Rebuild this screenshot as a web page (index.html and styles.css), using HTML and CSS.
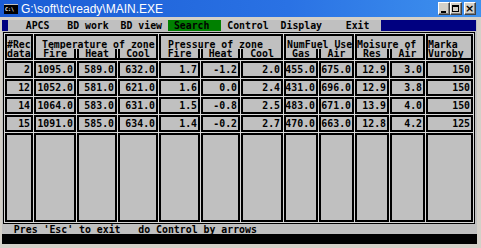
FILE: index.html
```html
<!DOCTYPE html>
<html>
<head>
<meta charset="utf-8">
<link rel="stylesheet" href="styles.css">
</head>
<body>
<div class="window">
  <div class="titlebar">
    <div class="appicon"><span class="appicon-text">C:\</span></div>
    <div class="title">G:\soft\tc\ready\MAIN.EXE</div>
    <div class="buttons">
      <div class="btn btn-min"><span class="min-glyph"></span></div>
      <div class="btn btn-max"><span class="max-glyph"></span></div>
      <div class="btn btn-close">×</div>
    </div>
  </div>
  <div class="screen">
    <div class="menu"><span class="blk"> </span>   APCS   BD work  BD view <span class="sel"> Search  </span> Control  Display    Exit  <span class="blk">                </span></div>
    <div class="frame">
      <div class="grid">
        <div class="cell head hl">#Rec<br>data</div>
        <div class="cell head group g3">
          <div class="gtitle pad6">Temperature of zone</div>
          <div class="sub sub-temp"><div class="sc first">Fire</div><div class="sc mid">Heat</div><div class="sc last">Cool</div></div>
        </div>
        <div class="cell head group g3">
          <div class="gtitle pad7">Pressure of zone</div>
          <div class="sub sub-press"><div class="sc first">Fire</div><div class="sc mid">Heat</div><div class="sc last">Cool</div></div>
        </div>
        <div class="cell head group g2">
          <div class="gtitle pad1">NumFuel Use</div>
          <div class="sub sub-fuel"><div class="sc first">Gas</div><div class="sc last">Air</div></div>
        </div>
        <div class="cell head group g2">
          <div class="gtitle">Moisure of</div>
          <div class="sub sub-moist"><div class="sc first">Res</div><div class="sc last">Air</div></div>
        </div>
        <div class="cell head hl">Marka<br>Vuroby</div>

        <div class="cell num">2</div><div class="cell num">1095.0</div><div class="cell num">589.0</div><div class="cell num">632.0</div><div class="cell num">1.7</div><div class="cell num">-1.2</div><div class="cell num">2.0</div><div class="cell num">455.0</div><div class="cell num">675.0</div><div class="cell num">12.9</div><div class="cell num">3.0</div><div class="cell num">150</div>

        <div class="cell num">12</div><div class="cell num">1052.0</div><div class="cell num">581.0</div><div class="cell num">621.0</div><div class="cell num">1.6</div><div class="cell num">0.0</div><div class="cell num">2.4</div><div class="cell num">431.0</div><div class="cell num">696.0</div><div class="cell num">12.9</div><div class="cell num">3.8</div><div class="cell num">150</div>

        <div class="cell num">14</div><div class="cell num">1064.0</div><div class="cell num">583.0</div><div class="cell num">631.0</div><div class="cell num">1.5</div><div class="cell num">-0.8</div><div class="cell num">2.5</div><div class="cell num">483.0</div><div class="cell num">671.0</div><div class="cell num">13.9</div><div class="cell num">4.0</div><div class="cell num">150</div>

        <div class="cell num">15</div><div class="cell num">1091.0</div><div class="cell num">585.0</div><div class="cell num">634.0</div><div class="cell num">1.4</div><div class="cell num">-0.2</div><div class="cell num">2.7</div><div class="cell num">470.0</div><div class="cell num">663.0</div><div class="cell num">12.8</div><div class="cell num">4.2</div><div class="cell num">125</div>

        <div class="cell"></div><div class="cell"></div><div class="cell"></div><div class="cell"></div><div class="cell"></div><div class="cell"></div><div class="cell"></div><div class="cell"></div><div class="cell"></div><div class="cell"></div><div class="cell"></div><div class="cell"></div>
      </div>
    </div>
    <div class="status">  Pres 'Esc' to exit   do Control by arrows</div>
    <div class="blackbar"></div>
  </div>
</div>
</body>
</html>
```

FILE: styles.css
```css
html, body {
  margin: 0;
  padding: 0;
  background: #d4d0c8;
}

.window {
  width: 481px;
  height: 248px;
  background: #d4d0c8;
  overflow: hidden;
}

.titlebar {
  height: 17px;
  display: flex;
  align-items: center;
  background: linear-gradient(to right, #1a5cd4, #2a72e4 60%, #3f92ee);
  color: #fff;
}

.appicon {
  width: 14px;
  height: 9px;
  margin-left: 4px;
  margin-top: 1px;
  background: #000;
  border-top: 1px solid #c0c0c0;
  display: flex;
  align-items: center;
  justify-content: flex-start;
  overflow: hidden;
}

.appicon-text {
  font-family: "DejaVu Sans Mono", monospace;
  font-size: 5px;
  font-weight: bold;
  line-height: 5px;
  color: #fff;
  margin-left: 1px;
}

.title {
  margin-left: 3px;
  font-family: "Liberation Sans", Arial, sans-serif;
  font-size: 12px;
  line-height: 14px;
  letter-spacing: 0;
  white-space: pre;
}

.buttons {
  margin-left: auto;
  margin-right: 5px;
  display: flex;
  align-items: center;
}

.btn {
  box-sizing: border-box;
  width: 12px;
  height: 13px;
  background: #d4d0c8;
  border: 1px solid;
  border-color: #fff #404040 #404040 #fff;
  box-shadow: inset -1px -1px 0 #808080;
  display: flex;
  align-items: center;
  justify-content: center;
  color: #000;
  position: relative;
}

.btn-max {
  margin-right: 2px;
}

.min-glyph {
  width: 5px;
  height: 2px;
  background: #000;
  margin-top: 6px;
  margin-right: 1px;
}

.max-glyph {
  box-sizing: border-box;
  width: 7px;
  height: 7px;
  border: 1px solid #000;
  border-top-width: 2px;
  margin-right: 1px;
}

.btn-close {
  font-family: "DejaVu Sans", sans-serif;
  font-weight: bold;
  font-size: 11px;
  line-height: 11px;
  padding-right: 1px;
}

.screen {
  margin-top: 3px;
  margin-left: 2px;
  width: 475px;
  height: 224px;
  background: #c0c0c0;
  font-family: "DejaVu Sans Mono", "Liberation Mono", monospace;
  font-weight: bold;
  font-size: 9.85px;
  line-height: 9px;
  color: #000;
}

.menu {
  padding-top: 1px;
  height: 9px;
  white-space: pre;
}

.blk {
  background: #000080;
}

.sel {
  background: #008000;
  color: #000;
}

.frame {
  margin-top: 2px;
  margin-left: 1px;
  width: 472px;
  height: 192px;
  box-sizing: border-box;
  border: 1px solid #000;
  padding: 1px;
  background: #d8d8d8;
}

.grid {
  display: grid;
  grid-template-columns: 28px 42px 40px 40px 41px 39px 42px 34px 35px 34px 35px 47px;
  grid-template-rows: 26px 17px 17px 17px 17px 89px;
  gap: 1px;
}

.cell {
  box-sizing: border-box;
  border: 2px solid #000;
  background: #c0c0c0;
  white-space: pre;
  overflow: visible;
}

.head.hl {
  padding-top: 4px;
}

.group {
  padding-top: 4px;
  display: flex;
  flex-direction: column;
}

.g3 {
  grid-column: span 3;
}

.g2 {
  grid-column: span 2;
}

.gtitle {
  height: 9px;
}

.pad6 { padding-left: 6px; }
.pad7 { padding-left: 7px; }
.pad1 { padding-left: 1px; }

.sub {
  display: grid;
  gap: 1px;
  background: #d8d8d8;
  height: 9px;
}

.sub-temp { grid-template-columns: 40px 40px 38px; }
.sub-press { grid-template-columns: 39px 39px 40px; }
.sub-fuel { grid-template-columns: 32px 33px; }
.sub-moist { grid-template-columns: 32px 33px; }

.sc {
  box-sizing: border-box;
  background: #c0c0c0;
  text-align: center;
  border-left: 2px solid #000;
  border-right: 2px solid #000;
}

.sc.first {
  border-left: 0;
}

.sc.last {
  border-right: 0;
}

.num {
  display: flex;
  align-items: center;
  justify-content: flex-end;
  padding-right: 1px;
}

.status {
  margin-top: 1px;
  height: 9px;
  white-space: pre;
}

.blackbar {
  margin-top: 0;
  height: 10px;
  background: #000;
}
```
